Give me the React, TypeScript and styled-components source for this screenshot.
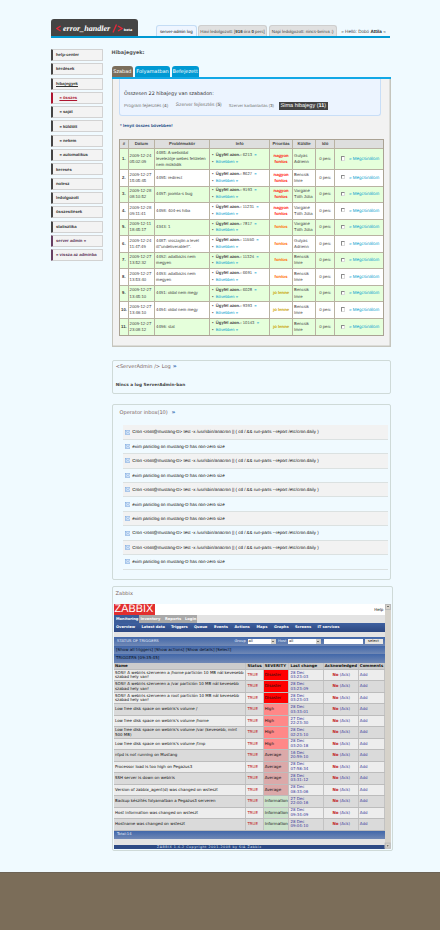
import React from 'react';
import styled, { createGlobalStyle, css } from 'styled-components';

const Global = createGlobalStyle`
  * { box-sizing: border-box; }
  html, body { margin: 0; padding: 0; }
  body {
    width: 440px; height: 930px; overflow: hidden; background: #f0faff;
    font-family: "Liberation Sans", Arial, sans-serif; font-size: 4.4px; line-height: 1.2;
    color: #444; text-rendering: geometricPrecision; white-space: nowrap;
  }
`;

const sans = '"Liberation Sans", Arial, sans-serif';
const verdana = '"DejaVu Sans", Verdana, sans-serif';

const Page = styled.div`
  display: flex; flex-direction: column; height: 930px; padding-top: 19px;
`;
const Header = styled.header`
  display: flex; align-items: flex-end; height: 19px; width: 339px; margin-left: 51px;
  border-bottom: 2px solid #0099d3; flex: none;
`;
const Logo = styled.div`
  display: flex; align-items: center; width: 87px; height: 17px; padding: 2px 0 0 5px;
  margin-right: 18px; background: #444; border-radius: 3px 3px 0 0;
  font: italic bold 8.1px "Liberation Serif", serif; color: #fff;
`;
const Mark = styled.svg`
  flex: none; fill: none; stroke: #e8283a; stroke-width: 1.3;
`;
const LogoText = styled.span`
  margin: 0 1.5px 0 2px;
`;
const Beta = styled.span`
  font: bold 3.4px ${verdana}; margin: 3px 0 0 1px;
`;
const HeaderTab = styled.div<{ $w: number; $active?: boolean }>`
  width: ${p => p.$w}px; height: ${p => (p.$active ? 11 : 10.6)}px; margin-right: 1.6px;
  padding-top: 2.6px; text-align: center; font-size: 4.4px;
  border: 1px solid ${p => (p.$active ? '#c4dcf4' : '#cecece')}; border-bottom: 0;
  border-radius: 3px 3px 0 0; background: ${p => (p.$active ? '#eef5ff' : '#e0e0e0')};
  color: ${p => (p.$active ? '#111' : '#444')};
`;
const Greeting = styled.div`
  font-size: 4.6px; margin: 0 0 1.4px 3px; b { color: #222; }
`;
const Body = styled.div`
  display: grid; grid-template-columns: 52px 281px; column-gap: 8.5px;
  margin: 11px 0 0 51px; height: 823px; flex: none;
`;
const SideNav = styled.nav`
  display: flex; flex-direction: column; gap: 2.3px;
`;
const SideItem = styled.a<{ $tone?: 'red' | 'purple'; $sub?: boolean; $u?: boolean }>`
  height: 12px; padding: 2.2px 0 0 ${p => (p.$sub ? 6.4 : 3)}px; font-size: 4.25px; font-weight: bold;
  border: 1px solid #d2d2d2; border-radius: 1px; background: #f3f3f3;
  border-left: 2.4px solid ${p => (p.$tone === 'red' ? '#ad1530' : p.$tone === 'purple' ? '#673f62' : '#444')};
  color: ${p => (p.$tone === 'red' ? '#ad1530' : p.$tone === 'purple' ? '#5c3457' : '#333')};
  text-decoration: ${p => (p.$u ? 'underline' : 'none')};
`;
const Main = styled.main`
  display: flex; flex-direction: column;
`;
const PageTitle = styled.h1`
  margin: 0; height: 17.3px; padding-top: 1.4px; font: bold 4.95px ${verdana}; color: #555;
`;
const Tabs = styled.div`
  display: flex; gap: 2px; height: 13px; width: 279.5px; border-bottom: 2px solid #12a8e6;
`;
const Tab = styled.div<{ $w: number; $active?: boolean }>`
  width: ${p => p.$w}px; height: 11px; padding-top: 3px; text-align: center;
  border-radius: 3px 3px 0 0; color: #fff; font: 5px ${verdana};
  background: ${p => (p.$active ? '#7b6e5c' : '#0099d3')};
`;
const Panel = styled.section`
  width: 279.7px; height: 267.4px; padding: 0 6.6px; background: #f2f2f2;
  border: 1px solid #c5c5bd; border-top: 0; box-shadow: inset -0.5px -0.5px #c5c5bd;
`;
const Filters = styled.div`
  width: 262px; height: 36.5px; padding: 12px 0 0 4px; background: #ecf4ff;
  border: 1px solid #c8def7; border-top: 0; border-radius: 0 0 3px 3px;
`;
const Summary = styled.div`
  font: 4.85px ${verdana}; color: #333; height: 10.2px;
`;
const FilterRow = styled.div`
  display: flex; align-items: center; height: 9px; color: #777;
`;
const Filter = styled.span<{ $w: number; $size: number; $active?: boolean }>`
  width: ${p => p.$w}px; font-size: ${p => p.$size}px; line-height: 8.6px;
  ${p => p.$active && css`background: #444; color: #fff; padding-left: 1.3px;`}
`;
const ExpandAll = styled.a`
  display: block; padding: 7.6px 0 0 1px; height: 23.1px; font-size: 4.3px; font-weight: bold; color: #234a86;
`;
const Tickets = styled.div`
  width: 265px; border: 1px solid #aaa294;
`;
const Cell = styled.div<{ $center?: boolean; $color?: string }>`
  display: flex; flex-direction: column; justify-content: center; padding: 0 1px;
  line-height: 6.2px; font-size: 4.25px;
  ${p => p.$center && css`text-align: center;`}
  ${p => p.$color && css`color: ${p.$color}; font-weight: bold;`}
`;
const TicketRow = styled.div<{ $h: number; $alt?: boolean; $head?: boolean }>`
  display: grid; grid-template-columns: 8.5px 26.5px 55px 60px 23px 23px 19px 1fr;
  height: ${p => p.$h}px; border-bottom: 1px solid #b9b2a2;
  background: ${p => (p.$head ? '#dedede' : p.$alt ? '#e5ffdb' : '#fff')};
  > ${Cell} { border-right: 1px solid #b9b2a2; }
  > ${Cell}:last-child { border-right: 0; }
  &:last-child { border-bottom: 0; }
  ${p => p.$head && css`font-weight: bold; text-align: center;`}
`;
const Info = styled(Cell)`
  padding-left: 2px; line-height: 6.8px; font-size: 4.15px;
`;
const Link = styled.span`
  color: #0b9fce;
`;
const Take = styled(Cell)`
  flex-direction: row; justify-content: flex-start; align-items: center; padding-left: 6px; gap: 3.6px; font-size: 4.5px;
`;
const Box = styled.i`
  width: 4.3px; height: 4.3px; background: #fff; border: 0.8px solid #8b8b8b;
  border-right-color: #ddd; border-bottom-color: #ddd; margin-top: -1px;
`;
const Card = styled.section<{ $h: number; $mt: number; $w?: number; $pad?: string }>`
  width: ${p => p.$w ?? 279.5}px; height: ${p => p.$h}px; margin-top: ${p => p.$mt}px; flex: none;
  padding: ${p => p.$pad ?? '3.2px 3.2px'}; border: 1px solid #cfdad8; border-radius: 2px;
`;
const CardTitle = styled.h2`
  margin: 0; font: 5.05px/6.5px ${verdana}; color: #7b5f5c;
`;
const Chevron = styled.span`
  color: #1858a8; font-weight: bold; font-size: 6px; margin-left: 2px;
`;
const EmptyNote = styled.p`
  margin: 12.4px 0 0; font: bold 4.25px ${verdana}; color: #444;
`;
const MailList = styled.div`
  width: 265px; margin: 8.6px 0 0 3px;
`;
const Mail = styled.div<{ $alt: boolean }>`
  display: flex; align-items: center; gap: 2px; height: 14.43px; padding-left: 2.2px;
  font-size: 4.45px; color: #111; border-bottom: 1px solid #dbe1e1;
  background: ${p => (p.$alt ? '#f2f2f2' : 'transparent')};
`;
const Frame = styled.div`
  display: flex; width: 277px; height: 244.5px; margin-top: 6.2px; overflow: hidden;
  font-family: ${verdana}; font-size: 3.65px;
`;
const FrameBody = styled.div`
  width: 271.3px; flex: none; background: #e3e3e3; color: #111;
`;
const ZTop = styled.div`
  display: flex; justify-content: space-between; height: 11px; background: #fff; padding-right: 2px;
`;
const ZLogo = styled.div`
  width: 41px; background: #e22e2e; color: #fff; font: 10.9px/11.8px ${sans}; padding-left: 0.6px;
`;
const Help = styled.span`
  padding-top: 3.5px; font-size: 4px;
`;
const ZMenu = styled.div`
  display: flex; height: 8px; font-weight: bold; line-height: 8px; color: #fff;
`;
const ZMenuItem = styled.span<{ $w: number; $active?: boolean }>`
  width: ${p => p.$w}px; padding-left: 2px; background: ${p => (p.$active ? '#3c5d99' : '#a9a9a9')};
`;
const ZNav = styled.div`
  display: flex; height: 9px; margin-bottom: 5px; padding-left: 2px; line-height: 8.5px;
  font-weight: bold; color: #fff; background: linear-gradient(#3e60a0, #2c4780);
`;
const ZNavItem = styled.span<{ $w: number }>`
  width: ${p => p.$w}px;
`;
const ZBar = styled.div<{ $h?: number }>`
  display: flex; align-items: center; height: ${p => p.$h ?? 8.3}px; padding-left: 2px;
  background: linear-gradient(#4167a9, #7088b5); color: #050d1c; font-size: 4.05px;
`;
const ZStatus = styled(ZBar)`
  color: #e6eefb; padding-left: 3px; font-size: 3.7px;
`;
const StatusTitle = styled.span`
  width: 117.5px; font-size: 3.85px;
`;
const SelectLabel = styled.span<{ $w: number }>`
  width: ${p => p.$w}px;
`;
const Select = styled.span<{ $w: number }>`
  display: flex; justify-content: space-between; width: ${p => p.$w}px; height: 5.5px; padding-left: 1px;
  line-height: 5.5px; background: #fff; color: #111; margin-right: 2px;
`;
const Arrow = styled.i`
  width: 5.2px; height: 5.5px; background: #d6d2ca; display: grid; place-items: center;
  &::after { content: ""; border: 1.5px solid transparent; border-top-color: #111; margin-top: 1.5px; }
`;
const SearchField = styled.span`
  width: 39px; height: 5.5px; background: #fff; margin: 0 2px 0 0.5px;
`;
const SelectButton = styled.span`
  width: 18px; height: 5.5px; background: #e9e7e3; color: #111; text-align: center; line-height: 5px;
`;
const ZRow = styled.div<{ $odd?: boolean; $head?: boolean }>`
  display: grid; grid-template-columns: 132.4px 17.4px 25.6px 34.4px 35px 1fr;
  height: ${p => (p.$head ? 7.2 : 11.48)}px; border-bottom: 1px solid #bcbcbc; align-items: stretch;
  background: ${p => (p.$head ? '#ccc' : p.$odd ? '#ededed' : '#dadada')}; font-size: 3.98px;
  ${p => p.$head && css`font-weight: bold; font-size: 3.95px;`}
`;
const ZCell = styled.div<{ $bg?: string; $color?: string; $center?: boolean }>`
  display: flex; flex-direction: column; justify-content: center; padding-left: 1px; line-height: 4.5px;
  border-right: 1px solid #c2c2c2;
  background: ${p => p.$bg ?? 'transparent'}; color: ${p => p.$color ?? '#111'};
  ${p => p.$center && css`text-align: center;`}
`;
const Ack = styled.span`
  color: #403c9a; b { color: #c11c24; }
`;
const ZFoot = styled.div`
  margin-top: 6px; height: 4px; padding-left: 43px; background: #2d4a85; color: #dde5f5; line-height: 4.4px;
  font-size: 3.3px; letter-spacing: 0.5px;
`;
const Scroll = styled.div`
  display: flex; flex-direction: column; justify-content: space-between; width: 5.7px; background: #d6d2ca;
`;
const ScrollButton = styled.i<{ $down?: boolean }>`
  display: grid; place-items: center; width: 5.7px; height: 5.6px; background: #d6d2ca;
  border: 0.5px solid #bbb; transform: ${p => (p.$down ? 'rotate(180deg)' : 'none')};
  &::after { content: ""; border: 1.6px solid transparent; border-bottom-color: #111; margin-top: -1.5px; }
`;
const Footer = styled.footer`
  height: 58px; margin-top: auto; background: #7b6d59; border-top: 1px solid #6d6355; flex: none;
`;

const Envelope = () => (
  <svg width="5.6" height="5" viewBox="0 0 12 10">
    <rect x=".5" y=".5" width="11" height="9" fill="#d3e5fa" stroke="#6f9fda" />
    <path d="M1 1l5 4.5L11 1M1 9l3.500-4M11 9L7.500 5" fill="none" stroke="#86addd" />
  </svg>
);

const nav: { label: string; sub?: boolean; tone?: 'red' | 'purple'; u?: boolean }[] = [
  { label: 'help-center' }, { label: 'kérdések' }, { label: 'hibajegyek', u: true },
  { label: '» összes', sub: true, tone: 'red', u: true }, { label: '» saját', sub: true },
  { label: '» küldött', sub: true }, { label: '» nekem', sub: true }, { label: '» automatikus', sub: true },
  { label: 'keresés' }, { label: 'notesz' }, { label: 'ledolgozott' }, { label: 'összesítések' },
  { label: 'statisztika' }, { label: 'server admin »', tone: 'purple' }, { label: '« vissza az adminba', tone: 'purple' },
];

const RED = '#ff1a0e', ORANGE = '#ff6a00', GOLD = '#c8a000';
type Ticket = [string, string, string[], string, string[], string, string[]];
const tickets: Ticket[] = [
  ['2009-12-24', '05:02:09', ['4485: A weboldal', 'levelezője webes felületen', 'nem működik'], '6213', ['nagyon', 'fontos'], RED, ['Gulyás', 'Adrienn']],
  ['2009-12-27', '15:05:45', ['4495: redirect'], '8627', ['nagyon', 'fontos'], RED, ['Bencsik', 'Imre']],
  ['2009-12-28', '08:10:52', ['4497: joomla-s bug'], '9193', ['nagyon', 'fontos'], RED, ['Vargáné', 'Tóth Júlia']],
  ['2009-12-28', '09:11:41', ['4498: 404-es hiba'], '11231', ['nagyon', 'fontos'], RED, ['Vargáné', 'Tóth Júlia']],
  ['2009-12-11', '18:45:17', ['4343: 1'], '7817', ['fontos'], ORANGE, ['Vargáné', 'Tóth Júlia']],
  ['2009-12-24', '11:47:49', ['4487: visszajön a levél', 'itt"undeliverable!!".'], '11550', ['fontos'], ORANGE, ['Gulyás', 'Adrienn']],
  ['2009-12-27', '13:52:32', ['4492: adatbázis nem', 'megyen'], '11324', ['fontos'], ORANGE, ['Bencsik', 'Imre']],
  ['2009-12-27', '13:53:40', ['4493: adatbázis nem', 'megyen'], '6691', ['fontos'], ORANGE, ['Bencsik', 'Imre']],
  ['2009-12-27', '13:45:10', ['4491: oldal nem megy'], '6028', ['jó lenne'], GOLD, ['Bencsik', 'Imre']],
  ['2009-12-27', '13:46:10', ['4494: oldal nem megy'], '9393', ['jó lenne'], GOLD, ['Bencsik', 'Imre']],
  ['2009-12-27', '23:08:12', ['4496: stat'], '10143', ['jó lenne'], GOLD, ['Bencsik', 'Imre']],
];

const CRON = 'Cron <root@mustang-D> test -x /usr/sbin/anacron || ( cd / && run-parts --report /etc/cron.daily )';
const EXIM = 'exim paniclog on mustang-D has non-zero size';
const mails = [CRON, EXIM, CRON, EXIM, CRON, EXIM, EXIM, CRON, CRON, EXIM];

const severity: Record<string, string> = { Disaster: '#ff0000', High: '#ff8888', Average: '#dba9a9', Information: '#cbe2cb' };
const triggers: [string[], string, string, string][] = [
  [['SOSI! A webiris szerveren a /home partíción 10 MB nál kevesebb', 'szabad hely van!'], 'Disaster', '28 Dec', '03:23:03'],
  [['SOSI! A webiris szerveren a /var partíción 10 MB nál kevesebb', 'szabad hely van!'], 'Disaster', '28 Dec', '03:23:09'],
  [['SOSI! A webiris szerveren a root partíción 10 MB nál kevesebb', 'szabad hely van!'], 'Disaster', '28 Dec', '03:23:03'],
  [["Low free disk space on webiris's volume /"], 'High', '28 Dec', '03:33:01'],
  [["Low free disk space on webiris's volume /home"], 'High', '27 Dec', '22:23:30'],
  [["Low free disk space on webiris's volume /var (kevesebb, mint", '500 MB)'], 'High', '28 Dec', '02:23:10'],
  [["Low free disk space on webiris's volume /tmp"], 'High', '28 Dec', '03:20:18'],
  [['ntpd is not running on Mustang'], 'Average', '16 Dec', '20:59:10'],
  [['Processor load is too high on Pegazus3'], 'Average', '28 Dec', '07:58:34'],
  [['SSH server is down on webiris'], 'Average', '28 Dec', '03:31:12'],
  [['Version of zabbix_agent(d) was changed on wsteszt'], 'Average', '28 Dec', '08:33:06'],
  [['Backup készítés folyamatban a Pegazus3 serveren'], 'Information', '27 Dec', '22:00:16'],
  [['Host information was changed on wsteszt'], 'Information', '28 Dec', '09:34:09'],
  [['Hostname was changed on wsteszt'], 'Information', '28 Dec', '09:04:10'],
];

const zabbixNav: [string, number][] = [
  ['Overview', 25.5], ['Latest data', 29.5], ['Triggers', 23], ['Queue', 20], ['Events', 20.5], ['Actions', 22],
  ['Maps', 17.5], ['Graphs', 21], ['Screens', 22.5], ['IT services', 28],
];

const lines = (parts: string[]) => parts.map((t, i) => <span key={i}>{t}</span>);

export default function App() {
  return (
    <Page>
      <Global />
      <Header>
        <Logo>
          <Mark width="5" height="7" viewBox="0 0 5 7"><path d="M4.700 1L.8 3.500l3.900 2.500" /></Mark>
          <LogoText>error_handler</LogoText>
          <Mark width="11" height="9" viewBox="0 0 11 9"><path d="M4.500.5L1 8.500M6 2l4 2.500L6 7" /></Mark>
          <Beta>beta</Beta>
        </Logo>
        <HeaderTab $w={40.5} $active>server-admin log</HeaderTab>
        <HeaderTab $w={69}>Havi ledolgozott: [<b>916</b> óra <b>0</b> perc]</HeaderTab>
        <HeaderTab $w={68}>Napi ledolgozott: nincs-beírva :)</HeaderTab>
        <Greeting>» Helló: Dobó <b>Attila</b> «</Greeting>
      </Header>
      <Body>
        <SideNav>
          {nav.map(n => <SideItem key={n.label} $sub={n.sub} $tone={n.tone} $u={n.u}>{n.label}</SideItem>)}
        </SideNav>
        <Main>
          <PageTitle>Hibajegyek:</PageTitle>
          <Tabs>
            <Tab $w={21.8} $active>Szabad</Tab>
            <Tab $w={34.5}>Folyamatban</Tab>
            <Tab $w={27}>Befejezett</Tab>
          </Tabs>
          <Panel>
            <Filters>
              <Summary>Összesen 22 hibajegy van szabadon:</Summary>
              <FilterRow>
                <Filter $w={51.7} $size={4.5}>Program fejlesztés (<b>4</b>)</Filter>
                <Filter $w={53} $size={4.9}>Szerver fejlesztés (<b>5</b>)</Filter>
                <Filter $w={50.5} $size={4.2}>Szerver karbantartás (<b>3</b>)</Filter>
                <Filter $w={49} $size={5.5} $active>Sima hibajegy (<b>11</b>)</Filter>
              </FilterRow>
            </Filters>
            <ExpandAll>* lenyit összes bővebben!</ExpandAll>
            <Tickets>
              <TicketRow $h={9.2} $head>
                {['#', 'Dátum', 'Problémakör', 'Infó', 'Prioritás', 'Küldte', 'Idő', ''].map((h, i) => <Cell key={i} $center>{h}</Cell>)}
              </TicketRow>
              {tickets.map(([d, t, problem, id, prio, color, who], i) => (
                <TicketRow key={i} $h={i === 0 ? 20.9 : 16.55} $alt={i % 2 === 0}>
                  <Cell $center><b>{i + 1}.</b></Cell>
                  <Cell>{lines([d, t])}</Cell>
                  <Cell>{lines(problem)}</Cell>
                  <Info>
                    <span>•&nbsp; <b>Ügyfél azon.:</b> {id} &nbsp;<Link>»</Link></span>
                    <span>•&nbsp; <Link>Bővebben »</Link></span>
                  </Info>
                  <Cell $center $color={color}>{lines(prio)}</Cell>
                  <Cell>{lines(who)}</Cell>
                  <Cell $center>0 perc</Cell>
                  <Take><Box /><Link>» Megcsinálom</Link></Take>
                </TicketRow>
              ))}
            </Tickets>
          </Panel>
          <Card $h={34} $mt={13}>
            <CardTitle>&lt;ServerAdmin /&gt; Log<Chevron>»</Chevron></CardTitle>
            <EmptyNote>Nincs a log ServerAdmin-ban</EmptyNote>
          </Card>
          <Card $h={175.6} $mt={10.6} $pad="5px 7px">
            <CardTitle>Operator inbox(10) <Chevron>»</Chevron></CardTitle>
            <MailList>
              {mails.map((m, i) => <Mail key={i} $alt={i % 2 === 0}><Envelope />{m}</Mail>)}
            </MailList>
          </Card>
          <Card $h={265} $mt={6.6} $w={281} $pad="4px 0 0 1.5px">
            <CardTitle>&nbsp;Zabbix</CardTitle>
            <Frame>
              <FrameBody>
                <ZTop><ZLogo>ZABBIX</ZLogo><Help>Help</Help></ZTop>
                <ZMenu>
                  <ZMenuItem $w={24.5} $active>Monitoring</ZMenuItem><ZMenuItem $w={24.5}>Inventory</ZMenuItem>
                  <ZMenuItem $w={20}>Reports</ZMenuItem><ZMenuItem $w={14}>Login</ZMenuItem>
                </ZMenu>
                <ZNav>{zabbixNav.map(([t, w]) => <ZNavItem key={t} $w={w}>{t}</ZNavItem>)}</ZNav>
                <ZStatus $h={9}>
                  <StatusTitle>STATUS OF TRIGGERS</StatusTitle>
                  <SelectLabel $w={13}>Group</SelectLabel><Select $w={28.5}>all<Arrow /></Select>
                  <SelectLabel $w={10}>Host</SelectLabel><Select $w={33}>all<Arrow /></Select>
                  <SearchField /><SelectButton>select</SelectButton>
                </ZStatus>
                <ZBar>[Show all triggers] [Show actions] [Show details] [Select]</ZBar>
                <ZBar>TRIGGERS [09:35:45]</ZBar>
                <ZRow $head>
                  {['Name', 'Status', 'SEVERITY', 'Last change', 'Acknowledged', 'Comments'].map(h => <ZCell key={h}>{h}</ZCell>)}
                </ZRow>
                {triggers.map(([name, sev, d, t], i) => (
                  <ZRow key={i} $odd={i % 2 === 0}>
                    <ZCell>{lines(name)}</ZCell>
                    <ZCell $color="#c11c24">TRUE</ZCell>
                    <ZCell $bg={severity[sev]}>{sev}</ZCell>
                    <ZCell $color="#403c9a">{lines([d, t])}</ZCell>
                    <ZCell $center><Ack><b>No</b> (Ack)</Ack></ZCell>
                    <ZCell $color="#403c9a">Add</ZCell>
                  </ZRow>
                ))}
                <ZStatus>Total:14</ZStatus>
                <ZFoot>ZABBIX 1.6.2 Copyright 2001-2008 by SIA Zabbix</ZFoot>
              </FrameBody>
              <Scroll><ScrollButton /><ScrollButton $down /></Scroll>
            </Frame>
          </Card>
        </Main>
      </Body>
      <Footer />
    </Page>
  );
}
